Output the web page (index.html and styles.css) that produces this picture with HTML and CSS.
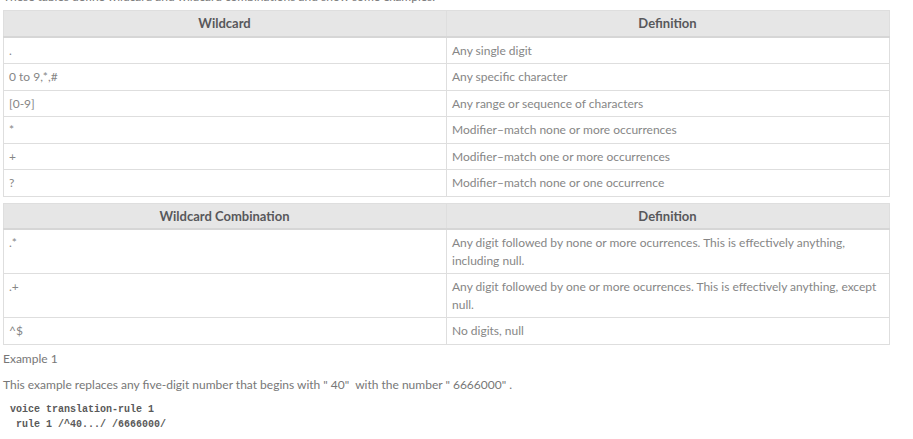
FILE: index.html
```html
<!DOCTYPE html>
<html lang="en">
<head>
    <meta charset="UTF-8">
    <title>Voice Translation Rules - Wildcards</title>
    <link rel="stylesheet" href="styles.css">
</head>
<body>
    <div class="page">
        <p class="intro">These tables define wildcard and wildcard combinations and show some examples.</p>

        <table class="ref-table">
            <thead>
                <tr>
                    <th>Wildcard</th>
                    <th>Definition</th>
                </tr>
            </thead>
            <tbody>
                <tr><td>.</td><td>Any single digit</td></tr>
                <tr><td>0 to 9,*,#</td><td>Any specific character</td></tr>
                <tr><td>[0-9]</td><td>Any range or sequence of characters</td></tr>
                <tr><td>*</td><td>Modifier&ndash;match none or more occurrences</td></tr>
                <tr><td>+</td><td>Modifier&ndash;match one or more occurrences</td></tr>
                <tr><td>?</td><td>Modifier&ndash;match none or one occurrence</td></tr>
            </tbody>
        </table>

        <table class="ref-table">
            <thead>
                <tr>
                    <th>Wildcard Combination</th>
                    <th>Definition</th>
                </tr>
            </thead>
            <tbody>
                <tr><td>.*</td><td>Any digit followed by none or more ocurrences. This is effectively anything, including null.</td></tr>
                <tr><td>.+</td><td>Any digit followed by one or more ocurrences. This is effectively anything, except null.</td></tr>
                <tr><td>^$</td><td>No digits, null</td></tr>
            </tbody>
        </table>

        <p class="example-title">Example 1</p>
        <p class="example-text">This example replaces any five-digit number that begins with " 40"&nbsp; with the number " 6666000" .</p>
        <pre class="code">voice translation-rule 1
 rule 1 /^40.../ /6666000/</pre>
    </div>
</body>
</html>
```

FILE: styles.css
```css
/* Base */
body {
    margin: 0;
    background: #ffffff;
    font-family: 'Lato', 'Liberation Sans', sans-serif;
    font-size: 12px;
    font-weight: 400;
    color: #777777;
}

.page {
    padding: 0 23px 0 3px;
    margin-top: -12px;
}

p {
    margin: 0;
    line-height: 17px;
}

.intro {
    margin-bottom: 5px;
}

/* Tables */
.ref-table {
    width: 100%;
    border-collapse: collapse;
    table-layout: fixed;
    margin-bottom: 6px;
}

.ref-table th,
.ref-table td {
    border: 1px solid #dedede;
    padding: 4px 6px 4px 5px;
    line-height: 17.5px;
    text-align: left;
    vertical-align: top;
}

.ref-table th {
    background: #e6e6e6;
    border-bottom: 2px solid #d6d6d6;
    color: #58585b;
    font-size: 13px;
    font-weight: 700;
    text-align: center;
    padding-top: 4px;
    padding-bottom: 3px;
}

.ref-table td {
    color: #868686;
}

/* Example */
.example-title {
    margin-top: -1px;
}

.example-text {
    margin-top: 9px;
}

.code {
    margin: 9px 0 0 7px;
    font-family: 'Liberation Mono', monospace;
    font-size: 10px;
    font-weight: 700;
    line-height: 15px;
    color: #595959;
}
```
